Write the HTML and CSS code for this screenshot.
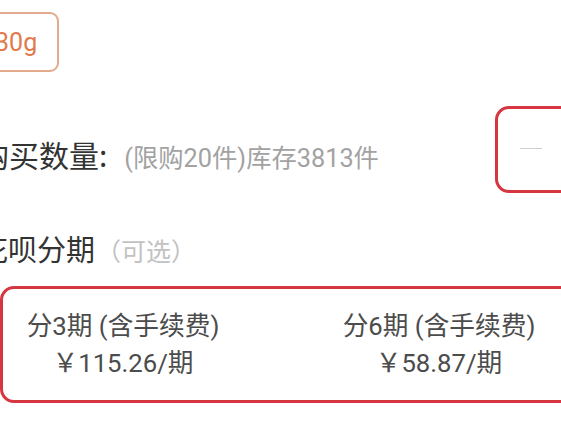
FILE: index.html
```html
<!DOCTYPE html>
<html lang="zh">
<head>
<meta charset="utf-8">
<title>购买数量</title>
<link rel="stylesheet" href="styles.css">
</head>
<body>
<div class="sheet">
  <div class="spec-row">
    <span class="tag">230g</span>
  </div>
  <div class="qty-row">
    <div class="qty-label">
      <span class="label">购买数量:</span>
      <span class="hint">(限购20件)库存3813件</span>
    </div>
    <div class="stepper">
      <span class="minus"></span>
      <span class="count">1</span>
      <span class="plus">+</span>
    </div>
  </div>
  <div class="section-title">
    <span class="label">花呗分期</span>
    <span class="optional">（可选）</span>
  </div>
  <div class="plans">
    <div class="plan">
      <div class="plan-name">分3期 (含手续费)</div>
      <div class="plan-price">￥115.26/期</div>
    </div>
    <div class="plan">
      <div class="plan-name">分6期 (含手续费)</div>
      <div class="plan-price">￥58.87/期</div>
    </div>
    <div class="plan">
      <div class="plan-name">分12期 (含手续费)</div>
      <div class="plan-price">￥30.12/期</div>
    </div>
  </div>
</div>
</body>
</html>
```
FILE: styles.css
```css
html, body {
  margin: 0;
  padding: 0;
  background: #ffffff;
  overflow: hidden;
}

body {
  width: 561px;
  height: 421px;
  font-family: Roboto, "Noto Sans CJK SC", sans-serif;
  color: #333333;
}

.sheet {
  margin-left: -21px;
  width: 1000px;
  padding-top: 12px;
}

.spec-row {
  display: flex;
  height: 60px;
}

.tag {
  box-sizing: border-box;
  height: 60px;
  margin-left: -22px;
  padding: 0 20px 0 22px;
  border: 2px solid #e3aa8c;
  border-radius: 9px;
  color: #e07a4c;
  font-size: 25px;
  display: flex;
  align-items: center;
}

.qty-row {
  display: flex;
  align-items: center;
  margin-top: 34px;
}

.qty-label {
  width: 516px;
  display: flex;
  align-items: baseline;
  padding-top: 8px;
}

.label {
  font-family: "Noto Sans CJK SC", sans-serif;
  font-size: 30px;
  color: #333333;
  line-height: 40px;
}

.hint {
  margin-left: 17px;
  font-size: 25.3px;
  color: #a2a2a2;
}

.stepper {
  box-sizing: border-box;
  height: 87px;
  width: 220px;
  border: 3px solid #d6363f;
  border-radius: 14px;
  display: flex;
  align-items: center;
}

.minus {
  display: block;
  width: 22px;
  height: 0;
  border-top: 1.5px solid #cfcfcf;
  margin-left: 22px;
  margin-top: -2px;
}

.count {
  margin-left: 40px;
  font-size: 25px;
  color: #333;
}

.plus {
  margin-left: 40px;
  font-size: 28px;
  color: #333;
}

.section-title {
  display: flex;
  align-items: baseline;
  margin-top: 35px;
}

.section-title .label {
  font-size: 29px;
}

.optional {
  margin-left: 1px;
  font-family: "Noto Sans CJK SC", sans-serif;
  font-size: 25px;
  color: #c2c2c2;
}

.plans {
  box-sizing: border-box;
  margin-top: 18px;
  margin-left: 21px;
  width: 960px;
  height: 117px;
  border: 3px solid #d6363f;
  border-radius: 14px;
  display: flex;
  align-items: center;
  gap: 76px;
}

.plan {
  width: 240px;
  flex: none;
  text-align: center;
  color: #4c4c4c;
  font-size: 25.7px;
  line-height: 37px;
}
```
